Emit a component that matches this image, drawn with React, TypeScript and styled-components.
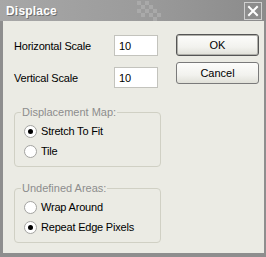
import React from 'react';
import styled, { createGlobalStyle } from 'styled-components';

const Global = createGlobalStyle`
  html, body { margin: 0; padding: 0; background: #ffffff; }
  body { font-family: "Liberation Sans", Arial, sans-serif; font-size: 11px; }
`;

const Window = styled.div`
  width: 266px;
  height: 257px;
  display: flex;
  flex-direction: column;
  background: #8e8e8e;
`;

const TitleBar = styled.div`
  position: relative;
  height: 21px;
  flex: none;
  display: flex;
  align-items: center;
  padding: 0 4px 0 6px;
  background: linear-gradient(to right, #a7a7a7 0%, #9c9c9c 50%, #8b8b8b 100%);
`;

const Title = styled.div`
  flex: 1;
  font-weight: bold;
  font-size: 12px;
  color: #ffffff;
  text-shadow: 1px 1px 0 #6e6e6e;
  letter-spacing: 0.2px;
`;

const Checker = styled.svg`
  position: absolute;
  left: 137px;
  top: 1px;
`;

const CloseButton = styled.div`
  width: 16px;
  height: 16px;
  border: 1px solid #cfcfcf;
  display: flex;
  align-items: center;
  justify-content: center;
`;

const Frame = styled.div`
  flex: 1;
  display: flex;
  padding: 0 2px 4px 3px;
`;

const Body = styled.div`
  flex: 1;
  display: flex;
  align-items: flex-start;
  background: #ebebe4;
  padding: 13px 0 0 11px;
`;

const LeftCol = styled.div`
  width: 147px;
  display: flex;
  flex-direction: column;
  padding-top: 1px;
`;

const FieldRow = styled.div<{ $gap?: number }>`
  height: 21px;
  display: flex;
  align-items: center;
  justify-content: space-between;
  padding-right: 3px;
  margin-top: ${(p) => p.$gap ?? 0}px;
  color: #000;
  letter-spacing: -0.2px;
`;

const Input = styled.div`
  width: 44px;
  height: 21px;
  box-sizing: border-box;
  background: #ffffff;
  border: 1px solid #c3c3bd;
  display: flex;
  align-items: center;
  padding-left: 4px;
  color: #000;
`;

const Group = styled.fieldset<{ $top: number }>`
  margin: ${(p) => p.$top}px 0 0 0;
  padding: 2px 0 5px 9px;
  border: 1px solid #d0d0c4;
  border-radius: 4px;
  min-inline-size: 0;
`;

const Legend = styled.legend`
  font-size: 11px;
  line-height: 13px;
  color: #8d8d8d;
  padding: 0 1px;
  margin-left: -3px;
`;

const RadioRow = styled.label`
  height: 20px;
  display: flex;
  align-items: center;
  gap: 4px;
  color: #000;
  letter-spacing: -0.2px;
`;

const RadioCircle = styled.span<{ $checked?: boolean }>`
  width: 13px;
  height: 13px;
  box-sizing: border-box;
  border-radius: 50%;
  border: 1px solid #a3a3a0;
  background: #ffffff;
  display: flex;
  align-items: center;
  justify-content: center;
  &::after {
    content: '';
    width: 5px;
    height: 5px;
    border-radius: 50%;
    background: ${(p) => (p.$checked ? '#000' : 'transparent')};
  }
`;

const RightCol = styled.div`
  width: 83px;
  margin-left: 15px;
  display: flex;
  flex-direction: column;
  gap: 6px;
`;

const Button = styled.div<{ $default?: boolean }>`
  height: 22px;
  box-sizing: border-box;
  border: 1px solid ${(p) => (p.$default ? '#555555' : '#7a7a7a')};
  border-radius: 3px;
  background: linear-gradient(to bottom, #fdfdfb 0%, #f2f2ee 60%, #e0e0d8 100%);
  box-shadow: ${(p) => (p.$default ? 'inset 0 0 0 1px #b0b0aa' : 'none')};
  display: flex;
  align-items: center;
  justify-content: center;
  color: #000;
`;

const Radio = ({ checked, label }: { checked?: boolean; label: string }) => (
  <RadioRow>
    <RadioCircle $checked={checked} />
    {label}
  </RadioRow>
);

export default function App() {
  const squares: [number, number][] = [
    [0, 0], [4, 4], [8, 0], [12, 4], [8, 8], [4, 12], [12, 12], [16, 8], [16, 16], [20, 12], [0, 8],
  ];
  return (
    <>
      <Global />
      <Window>
        <TitleBar>
          <Checker width="26" height="20" viewBox="0 0 26 20">
            {squares.map(([x, y], i) => (
              <rect key={i} x={x} y={y} width="4" height="4" fill="#b4b4b4" opacity={0.6} />
            ))}
          </Checker>
          <Title>Displace</Title>
          <CloseButton>
            <svg width="12" height="12" viewBox="0 0 12 12">
              <path d="M2 2 L10 10 M10 2 L2 10" stroke="#ffffff" strokeWidth="2" strokeLinecap="square" />
            </svg>
          </CloseButton>
        </TitleBar>
        <Frame>
          <Body>
            <LeftCol>
              <FieldRow>
                Horizontal Scale
                <Input>10</Input>
              </FieldRow>
              <FieldRow $gap={11}>
                Vertical Scale
                <Input>10</Input>
              </FieldRow>
              <Group $top={18}>
                <Legend>Displacement Map:</Legend>
                <Radio checked label="Stretch To Fit" />
                <Radio label="Tile" />
              </Group>
              <Group $top={15}>
                <Legend>Undefined Areas:</Legend>
                <Radio label="Wrap Around" />
                <Radio checked label="Repeat Edge Pixels" />
              </Group>
            </LeftCol>
            <RightCol>
              <Button $default>OK</Button>
              <Button>Cancel</Button>
            </RightCol>
          </Body>
        </Frame>
      </Window>
    </>
  );
}
